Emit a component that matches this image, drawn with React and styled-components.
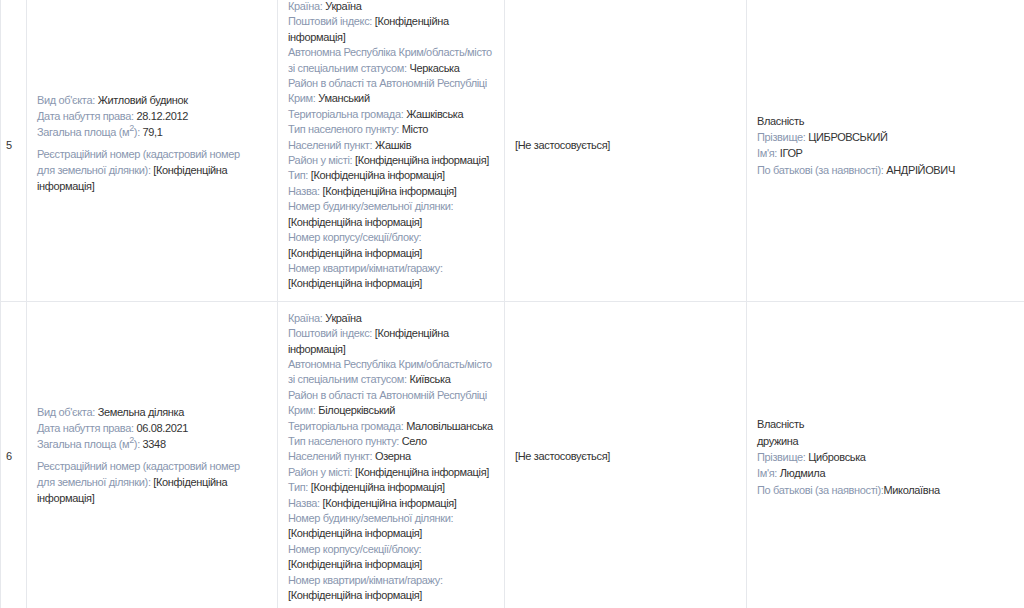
import styled, { createGlobalStyle } from 'styled-components';

const GlobalStyle = createGlobalStyle`
    html, body {
        margin: 0;
        padding: 0;
        background: #fff;
        overflow: hidden;
    }
    body {
        font-family: "Liberation Sans", Arial, sans-serif;
        font-size: 11px;
        letter-spacing: -0.35px;
        color: #333;
    }
`;

const Table = styled.table`
    border-collapse: collapse;
    table-layout: fixed;
    width: 1046px;
    margin-top: -11px;
`;

const Col = styled.col`
    width: ${(p) => p.$w}px;
`;

const Cell = styled.td`
    border: 1px solid #e6e8ec;
    padding: ${(p) => p.$pad || '9px 10px'};
    vertical-align: middle;
    line-height: 15.4px;
    color: #333;
`;

const Label = styled.span`
    color: #8a97af;
`;

const Line = styled.div``;

const ObjectBlock = styled.div`
    line-height: 16px;
`;

const RegBlock = styled.div`
    margin: 6px 0 5px;
    line-height: 16px;
`;

const Sup = styled.sup`
    font-size: 9px;
    line-height: 0;
`;

const OwnerBlock = styled.div`
    line-height: 16.3px;
`;

const Field = ({ label, value, tight }) => (
    <Line>
        <Label>{label}:</Label>
        {tight ? '' : ' '}
        {value}
    </Line>
);

const CONF = '[Конфіденційна інформація]';

const rows = [
    {
        n: 5,
        kind: 'Житловий будинок',
        date: '28.12.2012',
        area: '79,1',
        region: 'Черкаська',
        district: 'Уманський',
        hromada: 'Жашківська',
        type: 'Місто',
        place: 'Жашків',
        owner: {
            lines: ['Власність'],
            surname: 'ЦИБРОВСЬКИЙ',
            name: 'ІГОР',
            patronymic: 'АНДРІЙОВИЧ',
        },
    },
    {
        n: 6,
        kind: 'Земельна ділянка',
        date: '06.08.2021',
        area: '3348',
        region: 'Київська',
        district: 'Білоцерківський',
        hromada: 'Маловільшанська',
        type: 'Село',
        place: 'Озерна',
        owner: {
            lines: ['Власність', 'дружина'],
            surname: 'Цибровська',
            name: 'Людмила',
            patronymic: 'Миколаївна',
            tight: true,
        },
    },
];

const Row = ({ r }) => (
    <tr>
        <Cell $pad="9px 4px 9px 5px">{r.n}</Cell>
        <Cell $pad="9px 26px 9px 10px">
            <ObjectBlock>
                <Field label="Вид об'єкта" value={r.kind} />
                <Field label="Дата набуття права" value={r.date} />
                <Line>
                    <Label>
                        Загальна площа (м<Sup>2</Sup>):
                    </Label>{' '}
                    {r.area}
                </Line>
            </ObjectBlock>
            <RegBlock>
                <Field label="Реєстраційний номер (кадастровий номер для земельної ділянки)" value={CONF} />
            </RegBlock>
        </Cell>
        <Cell>
            <Field label="Країна" value="Україна" />
            <Field label="Поштовий індекс" value={CONF} />
            <Field label="Автономна Республіка Крим/область/місто зі спеціальним статусом" value={r.region} />
            <Field label="Район в області та Автономній Республіці Крим" value={r.district} />
            <Field label="Територіальна громада" value={r.hromada} />
            <Field label="Тип населеного пункту" value={r.type} />
            <Field label="Населений пункт" value={r.place} />
            <Field label="Район у місті" value={CONF} />
            <Field label="Тип" value={CONF} />
            <Field label="Назва" value={CONF} />
            <Field label="Номер будинку/земельної ділянки" value={CONF} />
            <Field label="Номер корпусу/секції/блоку" value={CONF} />
            <Field label="Номер квартири/кімнати/гаражу" value={CONF} />
        </Cell>
        <Cell>[Не застосовується]</Cell>
        <Cell>
            <OwnerBlock>
                {r.owner.lines.map((l) => (
                    <Line key={l}>{l}</Line>
                ))}
                <Field label="Прізвище" value={r.owner.surname} />
                <Field label="Ім'я" value={r.owner.name} />
                <Field label="По батькові (за наявності)" value={r.owner.patronymic} tight={r.owner.tight} />
            </OwnerBlock>
        </Cell>
    </tr>
);

export default function App() {
    return (
        <>
            <GlobalStyle />
            <Table>
                <colgroup>
                    <Col $w={26} />
                    <Col $w={251} />
                    <Col $w={227} />
                    <Col $w={242} />
                    <Col $w={300} />
                </colgroup>
                <tbody>
                    {rows.map((r) => (
                        <Row key={r.n} r={r} />
                    ))}
                </tbody>
            </Table>
        </>
    );
}
